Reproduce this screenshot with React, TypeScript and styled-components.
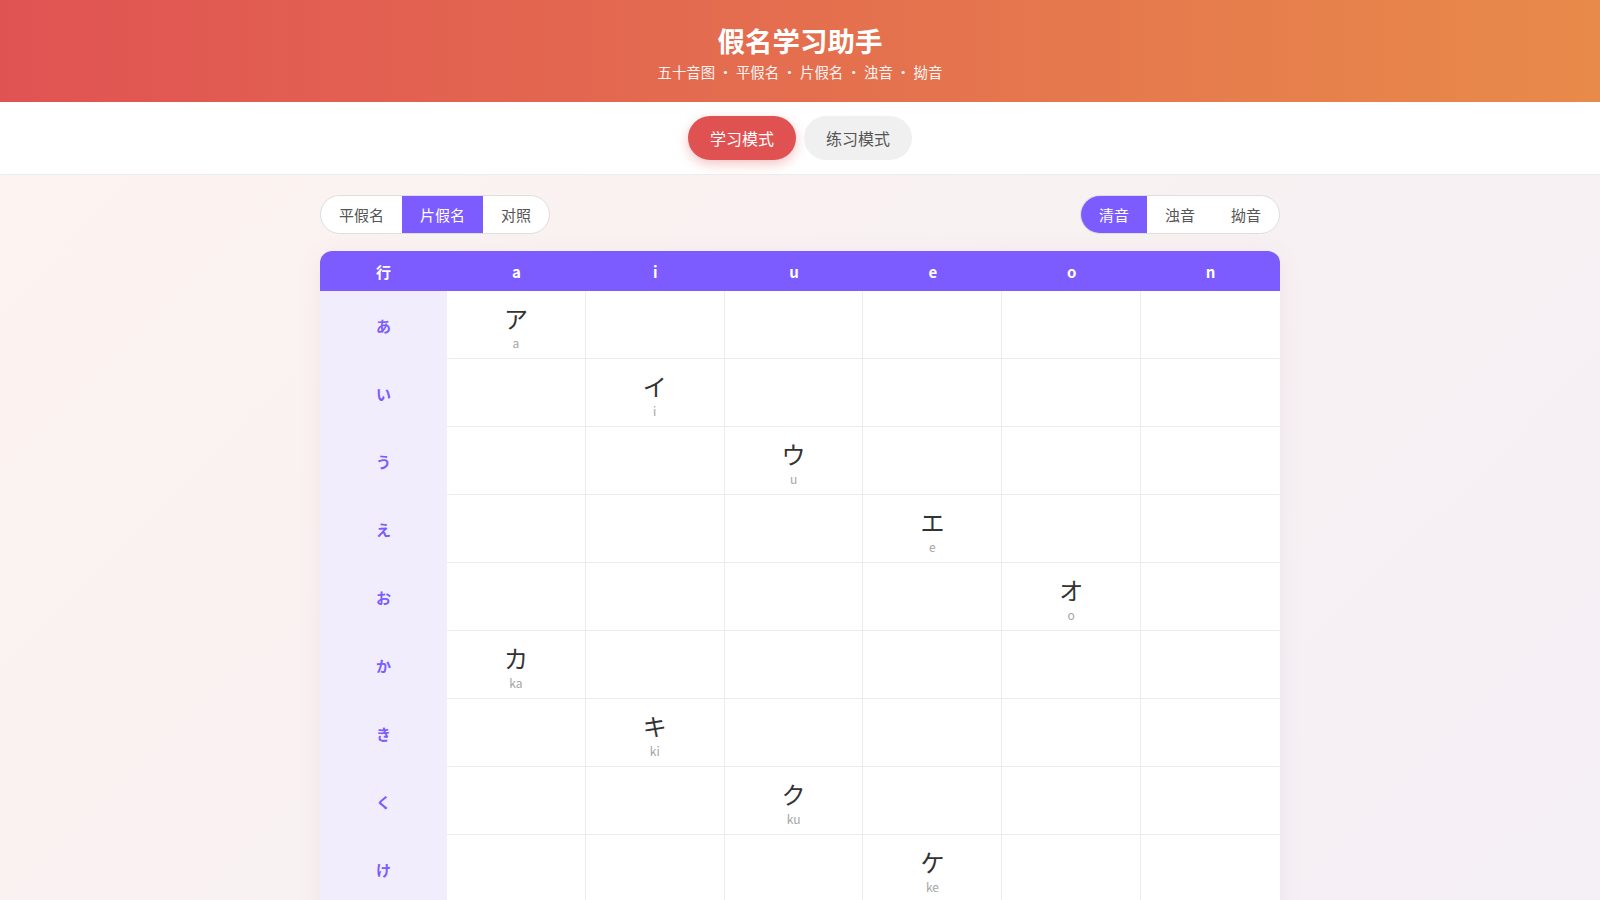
import React from 'react';
import styled, { createGlobalStyle } from 'styled-components';

const PURPLE = '#7c5cff';

interface Kana {
  row: string;
  kana: string;
  romaji: string;
}

const vowels = ['a', 'i', 'u', 'e', 'o', 'n'];

const kanaList: Kana[] = [
  { row: 'あ', kana: 'ア', romaji: 'a' },
  { row: 'い', kana: 'イ', romaji: 'i' },
  { row: 'う', kana: 'ウ', romaji: 'u' },
  { row: 'え', kana: 'エ', romaji: 'e' },
  { row: 'お', kana: 'オ', romaji: 'o' },
  { row: 'か', kana: 'カ', romaji: 'ka' },
  { row: 'き', kana: 'キ', romaji: 'ki' },
  { row: 'く', kana: 'ク', romaji: 'ku' },
  { row: 'け', kana: 'ケ', romaji: 'ke' },
  { row: 'こ', kana: 'コ', romaji: 'ko' },
  { row: 'さ', kana: 'サ', romaji: 'sa' },
  { row: 'し', kana: 'シ', romaji: 'shi' },
];

// which column a kana goes in, from the last letter of its romaji
const columnOf = (romaji: string) => vowels.indexOf(romaji.slice(-1));

const App: React.FC = () => {
  return (
    <>
      <Global />
      <Header>
        <Title>假名学习助手</Title>
        <Subtitle>五十音图 · 平假名 · 片假名 · 浊音 · 拗音</Subtitle>
      </Header>
      <ModeBar>
        <ModeButton $active>学习模式</ModeButton>
        <ModeButton>练习模式</ModeButton>
      </ModeBar>
      <Main>
        <Controls>
          <Segment>
            <SegButton>平假名</SegButton>
            <SegButton $active>片假名</SegButton>
            <SegButton>对照</SegButton>
          </Segment>
          <Segment>
            <SegButton $active>清音</SegButton>
            <SegButton>浊音</SegButton>
            <SegButton>拗音</SegButton>
          </Segment>
        </Controls>
        <Table>
          <HeadCell>行</HeadCell>
          {vowels.map((v) => (
            <HeadCell key={v}>{v}</HeadCell>
          ))}
          {kanaList.map(({ row, kana, romaji }) => {
            const col = columnOf(romaji);
            return (
              <React.Fragment key={row}>
                <RowHead>{row}</RowHead>
                {vowels.map((v, i) => (
                  <Cell key={v} $last={i === vowels.length - 1}>
                    {i === col && (
                      <>
                        <KanaChar>{kana}</KanaChar>
                        <Romaji>{romaji}</Romaji>
                      </>
                    )}
                  </Cell>
                ))}
              </React.Fragment>
            );
          })}
        </Table>
      </Main>
    </>
  );
};

const Global = createGlobalStyle`
  body {
    margin: 0;
    min-height: 100vh;
    font-family: "Noto Sans CJK SC", "Noto Sans", sans-serif;
    background: linear-gradient(135deg, #fdf4f0 0%, #f8f1f2 50%, #f4eff7 100%);
    color: #333;
  }
`;

const Header = styled.header`
  background: linear-gradient(90deg, #e05353 0%, #e88a4a 100%);
  color: #fff;
  text-align: center;
  padding: 22px 0 20px;
  display: flex;
  flex-direction: column;
  gap: 4px;
`;

const Title = styled.h1`
  margin: 0;
  font-size: 27.5px;
  font-weight: 700;
  line-height: 36px;
`;

const Subtitle = styled.div`
  font-size: 14.4px;
  line-height: 20px;
  opacity: 0.92;
`;

const ModeBar = styled.nav`
  background: #fff;
  border-bottom: 1px solid #ececec;
  display: flex;
  justify-content: center;
  gap: 8px;
  padding: 14px 0;
`;

const ModeButton = styled.button<{ $active?: boolean }>`
  border: none;
  border-radius: 22px;
  padding: 10px 22px;
  font-family: inherit;
  font-size: 16px;
  line-height: 24px;
  cursor: pointer;
  background: ${(p) => (p.$active ? '#e05252' : '#f0f0f0')};
  color: ${(p) => (p.$active ? '#fff' : '#555')};
  box-shadow: ${(p) => (p.$active ? '0 4px 12px rgba(224, 82, 82, 0.35)' : 'none')};
`;

const Main = styled.main`
  max-width: 960px;
  margin: 0 auto;
  padding: 20px 0 40px;
`;

const Controls = styled.div`
  display: flex;
  justify-content: space-between;
  align-items: center;
  margin-bottom: 17px;
`;

const Segment = styled.div`
  display: flex;
  background: #fff;
  border: 1px solid #dedede;
  border-radius: 20px;
  overflow: hidden;
`;

const SegButton = styled.button<{ $active?: boolean }>`
  border: none;
  padding: 0 18px;
  height: 37px;
  font-family: inherit;
  font-size: 15px;
  cursor: pointer;
  background: ${(p) => (p.$active ? PURPLE : 'transparent')};
  color: ${(p) => (p.$active ? '#fff' : '#555')};
`;

const Table = styled.div`
  display: grid;
  grid-template-columns: 127px repeat(6, 1fr);
  grid-template-rows: 40px;
  grid-auto-rows: 68px;
  background: #fff;
  border-radius: 12px;
  overflow: hidden;
  box-shadow: 0 4px 24px rgba(120, 80, 110, 0.08);
`;

const HeadCell = styled.div`
  background: ${PURPLE};
  color: #fff;
  font-weight: 700;
  font-size: 15px;
  display: flex;
  align-items: center;
  justify-content: center;
`;

const RowHead = styled.div`
  background: #f1edfd;
  color: ${PURPLE};
  font-weight: 700;
  font-size: 15px;
  display: flex;
  align-items: center;
  justify-content: center;
`;

const Cell = styled.div<{ $last?: boolean }>`
  box-sizing: border-box;
  border-bottom: 1px solid #ececec;
  border-right: ${(p) => (p.$last ? 'none' : '1px solid #ececec')};
  display: flex;
  flex-direction: column;
  align-items: center;
  justify-content: center;
  padding-top: 5px;
`;

const KanaChar = styled.div`
  font-size: 24px;
  line-height: 30px;
  color: #333;
`;

const Romaji = styled.div`
  font-size: 12px;
  line-height: 16px;
  margin-top: 2px;
  color: #a5a5a5;
`;

export default App;
